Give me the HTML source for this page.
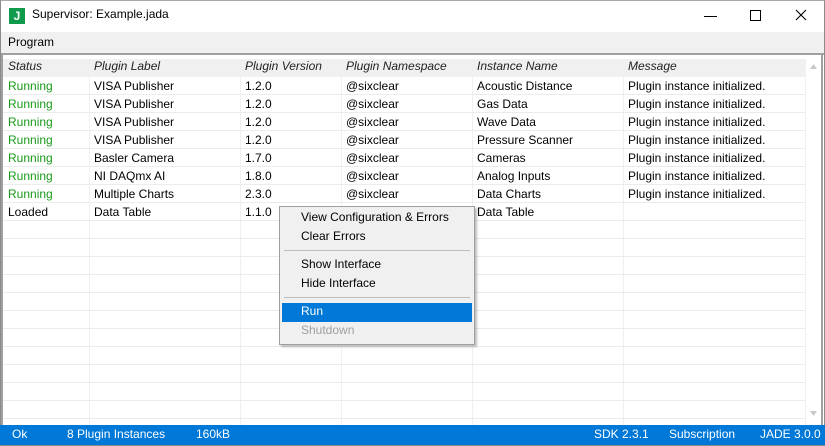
<html><head><style>
body{margin:0;width:825px;height:445px;overflow:hidden;background:#fff;font-family:"Liberation Sans",sans-serif;font-size:12px;position:relative}
.a{position:absolute}
.t{white-space:nowrap}
</style></head><body>
<div class="a" style="left:0;top:0;width:823px;height:444px;border:1px solid #8a8a8a;border-top:1px solid #aaa"></div>
<div class="a" style="left:9px;top:8px;width:16px;height:16px;background:#109a4c;color:#fff;font-weight:bold;font-size:12px;line-height:16px;text-align:center">J</div>
<div class="a t" style="left:32px;top:7px;font-size:12px">Supervisor: Example.jada</div>
<svg class="a" style="left:0;top:0" width="825" height="32">
<line x1="704" y1="16.5" x2="717" y2="16.5" stroke="#000"/>
<rect x="750.5" y="10.5" width="10" height="10" fill="none" stroke="#000"/>
<path d="M796 10 L806 20 M806 10 L796 20" stroke="#000" stroke-width="1.1"/>
</svg>
<div class="a" style="left:1px;top:32px;width:823px;height:21px;background:#f0f0f0;border-bottom:2px solid #a0a0a0"></div>
<div class="a t" style="left:8px;top:35px">Program</div>
<div class="a" style="left:1px;top:55px;width:2px;height:370px;background:#a0a0a0"></div>
<div class="a" style="left:821px;top:55px;width:2px;height:370px;background:#a0a0a0"></div>
<div class="a" style="left:3px;top:59px;width:803px;height:18px;background:#f0f0f0"></div>
<svg class="a" style="left:0;top:0" width="825" height="445">
<g stroke="#f0f0f0" stroke-width="1">
<line x1="89.5" y1="59" x2="89.5" y2="425"/><line x1="240.5" y1="59" x2="240.5" y2="425"/><line x1="341.5" y1="59" x2="341.5" y2="425"/><line x1="472.5" y1="59" x2="472.5" y2="425"/><line x1="623.5" y1="59" x2="623.5" y2="425"/><line x1="805.5" y1="59" x2="805.5" y2="425"/>
</g>
<g stroke="#ececec">
<line x1="3" x2="805" y1="94.5" y2="94.5"/><line x1="3" x2="805" y1="112.5" y2="112.5"/><line x1="3" x2="805" y1="130.5" y2="130.5"/><line x1="3" x2="805" y1="148.5" y2="148.5"/><line x1="3" x2="805" y1="166.5" y2="166.5"/><line x1="3" x2="805" y1="184.5" y2="184.5"/><line x1="3" x2="805" y1="202.5" y2="202.5"/><line x1="3" x2="805" y1="220.5" y2="220.5"/><line x1="3" x2="805" y1="238.5" y2="238.5"/><line x1="3" x2="805" y1="256.5" y2="256.5"/><line x1="3" x2="805" y1="274.5" y2="274.5"/><line x1="3" x2="805" y1="292.5" y2="292.5"/><line x1="3" x2="805" y1="310.5" y2="310.5"/><line x1="3" x2="805" y1="328.5" y2="328.5"/><line x1="3" x2="805" y1="346.5" y2="346.5"/><line x1="3" x2="805" y1="364.5" y2="364.5"/><line x1="3" x2="805" y1="382.5" y2="382.5"/><line x1="3" x2="805" y1="400.5" y2="400.5"/><line x1="3" x2="805" y1="418.5" y2="418.5"/>
</g>
<path d="M810 69 L813.5 64 L817 69Z" fill="#c8c8c8"/><path d="M810 411 L813.5 416 L817 411Z" fill="#c8c8c8"/>
</svg>
<div class="a" style="left:0;top:59px;font-style:italic;color:#222">
<span class="a t" style="left:8px">Status</span><span class="a t" style="left:94px">Plugin Label</span><span class="a t" style="left:245px">Plugin Version</span><span class="a t" style="left:346px">Plugin Namespace</span><span class="a t" style="left:477px">Instance Name</span><span class="a t" style="left:628px">Message</span></div>
<div class="a" style="left:0;top:77px;line-height:18px">
<div class="a t" style="left:8px;color:#1a9a1a">Running<br>Running<br>Running<br>Running<br>Running<br>Running<br>Running<br><span style="color:#000">Loaded</span></div>
<div class="a t" style="left:94px">VISA Publisher<br>VISA Publisher<br>VISA Publisher<br>VISA Publisher<br>Basler Camera<br>NI DAQmx AI<br>Multiple Charts<br>Data Table</div>
<div class="a t" style="left:245px">1.2.0<br>1.2.0<br>1.2.0<br>1.2.0<br>1.7.0<br>1.8.0<br>2.3.0<br>1.1.0</div>
<div class="a t" style="left:346px">@sixclear<br>@sixclear<br>@sixclear<br>@sixclear<br>@sixclear<br>@sixclear<br>@sixclear</div>
<div class="a t" style="left:477px">Acoustic Distance<br>Gas Data<br>Wave Data<br>Pressure Scanner<br>Cameras<br>Analog Inputs<br>Data Charts<br>Data Table</div>
<div class="a t" style="left:628px">Plugin instance initialized.<br>Plugin instance initialized.<br>Plugin instance initialized.<br>Plugin instance initialized.<br>Plugin instance initialized.<br>Plugin instance initialized.<br>Plugin instance initialized.</div>
</div>
<div class="a" style="left:279px;top:206px;width:194px;height:137px;background:#f0f0f0;border:1px solid #a0a0a0;box-shadow:2px 2px 2px rgba(0,0,0,.25)">
<div class="a t" style="left:21px;top:3px">View Configuration &amp; Errors</div>
<div class="a t" style="left:21px;top:22px">Clear Errors</div>
<div class="a" style="left:4px;top:43px;width:186px;height:1px;background:#bdbdbd"></div>
<div class="a t" style="left:21px;top:50px">Show Interface</div>
<div class="a t" style="left:21px;top:69px">Hide Interface</div>
<div class="a" style="left:4px;top:90px;width:186px;height:1px;background:#bdbdbd"></div>
<div class="a" style="left:2px;top:96px;width:190px;height:19px;background:#0078d7"></div>
<div class="a t" style="left:21px;top:97px;color:#fff">Run</div>
<div class="a t" style="left:21px;top:116px;color:#a0a0a0">Shutdown</div>
</div>
<div class="a" style="left:0;top:425px;width:825px;height:20px;background:#0078d7;color:#fff">
<span class="a t" style="left:12px;top:2px">Ok</span><span class="a t" style="left:67px;top:2px">8 Plugin Instances</span><span class="a t" style="left:196px;top:2px">160kB</span>
<span class="a t" style="left:594px;top:2px">SDK 2.3.1</span><span class="a t" style="left:669px;top:2px">Subscription</span><span class="a t" style="left:760px;top:2px">JADE 3.0.0</span></div>
</body></html>
